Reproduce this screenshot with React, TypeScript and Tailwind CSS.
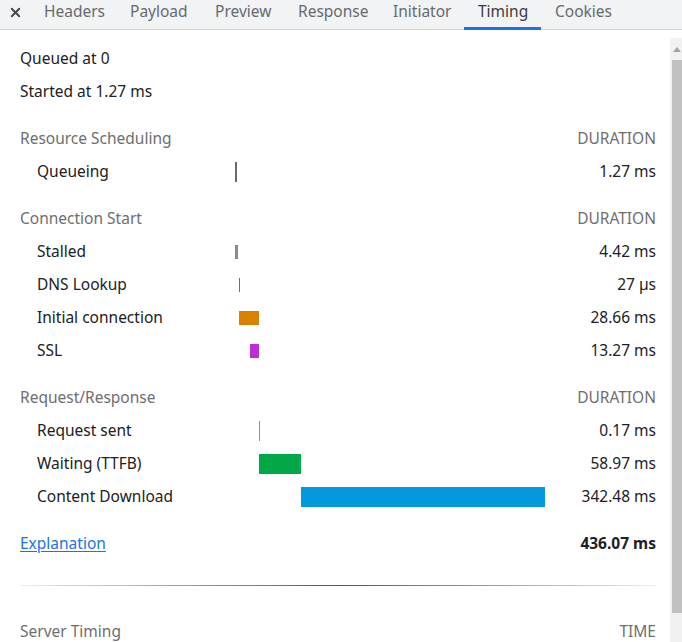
import { X } from 'lucide-react';

/**
 * DevTools network request – Timing tab
 */

type Phase = {
  label: string;
  start: number;
  duration: number;
  text: string;
  color: string;
  tall?: boolean;
  line?: boolean;
};

type Section = {
  title: string;
  phases: Phase[];
};

const TOTAL = 436.07;
const TRACK = 311;

const sections: Section[] = [
  {
    title: 'Resource Scheduling',
    phases: [
      { label: 'Queueing', start: 0, duration: 1.27, text: '1.27 ms', color: '#6b6b6b', tall: true, line: true },
    ],
  },
  {
    title: 'Connection Start',
    phases: [
      { label: 'Stalled', start: 0, duration: 4.42, text: '4.42 ms', color: '#8a8a8a' },
      { label: 'DNS Lookup', start: 5.69, duration: 0.027, text: '27 µs', color: '#0f9d8a', line: true },
      { label: 'Initial connection', start: 5.72, duration: 28.66, text: '28.66 ms', color: '#d98200' },
      { label: 'SSL', start: 21.11, duration: 13.27, text: '13.27 ms', color: '#bb2fd3' },
    ],
  },
  {
    title: 'Request/Response',
    phases: [
      { label: 'Request sent', start: 34.38, duration: 0.17, text: '0.17 ms', color: '#7d9c99', tall: true, line: true },
      { label: 'Waiting (TTFB)', start: 34.55, duration: 58.97, text: '58.97 ms', color: '#00a847', tall: true },
      { label: 'Content Download', start: 93.52, duration: 342.48, text: '342.48 ms', color: '#0399dd', tall: true },
    ],
  },
];

const tabs = [
  { name: 'Headers', w: 'w-[86px]' },
  { name: 'Payload', w: 'w-[85px]' },
  { name: 'Preview', w: 'w-[83px]' },
  { name: 'Response', w: 'w-[95px]' },
  { name: 'Initiator', w: 'w-[85px]' },
  { name: 'Timing', w: 'w-[77px]', active: true },
  { name: 'Cookies', w: 'w-[86px]' },
];

function TabBar() {
  return (
    <div className="flex h-[30px] shrink-0 items-stretch border-b border-[#cfd1d5] bg-[#f1f3f4]">
      <div className="flex w-[30px] items-center justify-center pb-[5px]">
        <X className="h-[15px] w-[15px] text-[#474747]" strokeWidth={3} />
      </div>
      {tabs.map((t) => (
        <div
          key={t.name}
          className={`relative flex items-center pb-[5px] pl-[14px] ${t.w} ${
            t.active ? 'text-[#3c3c3c]' : 'text-[#666a6f]'
          }`}
        >
          {t.name}
          {t.active && (
            <div className="absolute bottom-[-1px] left-0 right-0 h-[3px] bg-[#1a73e8]" />
          )}
        </div>
      ))}
    </div>
  );
}

function PhaseRow({ phase }: { phase: Phase }) {
  const left = Math.floor((phase.start / TOTAL) * TRACK);
  const width = phase.line
    ? phase.label === 'Queueing'
      ? 2
      : 1
    : Math.max(Math.round((phase.duration / TOTAL) * TRACK), 1);
  return (
    <div className="grid h-[33px] grid-cols-[215px_311px_1fr] items-center">
      <div className="pl-[17px] text-[#202124]">{phase.label}</div>
      <div className="flex items-center">
        <div
          className={phase.tall ? 'h-[20px]' : 'h-[14px]'}
          style={{ marginLeft: left, width, backgroundColor: phase.color }}
        />
      </div>
      <div className="text-right text-[#202124]">{phase.text}</div>
    </div>
  );
}

function Scrollbar() {
  return (
    <div className="mt-[8px] flex w-[12px] shrink-0 flex-col bg-[#f1f1f1]">
      <div className="flex h-[22px] items-center justify-center">
        <div className="ml-[2px] h-0 w-0 border-x-[4px] border-b-[5px] border-x-transparent border-b-[#a3a3a3]" />
      </div>
      <div className="ml-[2px] h-[553px] bg-[#c1c1c1]" />
    </div>
  );
}

export default function App() {
  return (
    <div className="flex h-[642px] w-full flex-col overflow-hidden bg-white font-['Noto_Sans',sans-serif] text-[15.5px]">
      <TabBar />
      <div className="flex min-h-0 flex-1">
        <div className="flex-1 pl-5 pr-[14px] pt-3">
          <div className="flex h-[33px] items-center text-[#202124]">Queued at 0</div>
          <div className="flex h-[33px] items-center text-[#202124]">Started at 1.27 ms</div>

          {sections.map((s) => (
            <div key={s.title} className="mt-[14px]">
              <div className="flex h-[33px] items-center justify-between text-[#6e6e6e]">
                <span>{s.title}</span>
                <span>DURATION</span>
              </div>
              {s.phases.map((p) => (
                <PhaseRow key={p.label} phase={p} />
              ))}
            </div>
          ))}

          <div className="mt-[14px] flex h-[33px] items-center justify-between">
            <a href="#" className="text-[#1a73e8] underline underline-offset-2">
              Explanation
            </a>
            <span className="font-bold text-[#202124]">436.07 ms</span>
          </div>

          <div className="mt-[25px] h-px bg-gradient-to-r from-[#eeeeee] via-[#55555c] to-[#eeeeee]" />

          <div className="mt-[29px] flex h-[33px] items-center justify-between text-[#6e6e6e]">
            <span>Server Timing</span>
            <span>TIME</span>
          </div>
        </div>
        <Scrollbar />
      </div>
    </div>
  );
}
